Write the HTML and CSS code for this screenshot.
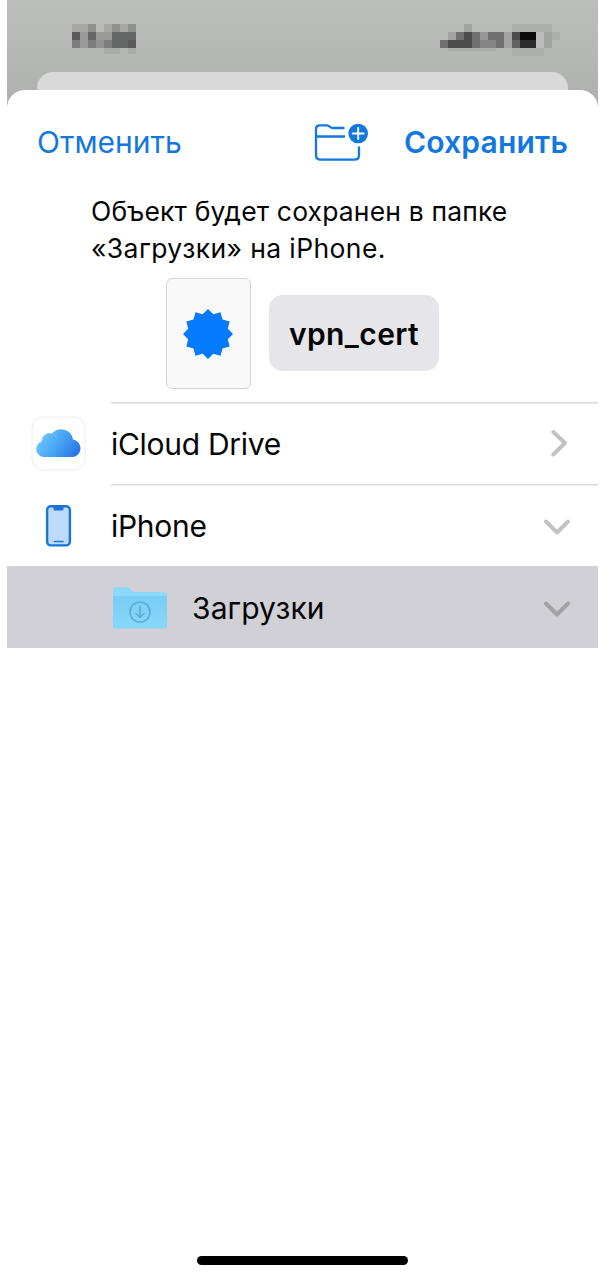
FILE: index.html
```html
<!DOCTYPE html>
<html lang="ru">
<head>
<meta charset="utf-8">
<title>Сохранение</title>
<link rel="stylesheet" href="styles.css">
</head>
<body>
<main class="phone">
  <header class="status">
    <svg class="clock" width="64" height="32" viewBox="0 0 8 4" shape-rendering="crispEdges">
      <path fill="#a6a7a5" d="M0 0h1v1H0zM1 0h1v1H1zM4 0h1v1H4zM6 0h1v1H6z"/>
      <path fill="#8f918f" d="M2 0h1v1H2zM5 0h1v1H5zM7 0h1v1H7z"/>
      <path fill="#595a59" d="M0 1h1v1H0zM7 2h1v1H7z"/>
      <path fill="#646765" d="M2 1h1v1H2zM5 1h3v1H5zM5 2h2v1H5z"/>
      <path fill="#9b9c9a" d="M1 1h1v1H1zM3 1h2v1H3zM1 2h1v1H1z"/>
      <path fill="#7c7d7c" d="M0 2h1v1H0zM2 2h1v1H2zM4 2h1v1H4z"/>
      <path fill="#919290" d="M3 2h1v1H3z"/>
      <path fill="#abacaa" d="M4 3h2v.75H4zM7 3h1v.75H7z"/>
    </svg>
    <svg class="signals" width="120" height="32" viewBox="0 0 15 4" shape-rendering="crispEdges">
      <path fill="#abaeab" d="M9 0h5v1H9zM9 3h4v1H9zM14 1h1v1h-1zM1 3h6v.4H1z"/>
      <path fill="#a2a4a1" d="M3 0h1v1H3zM13 1h1v2h-1zM1 1h1v1H1zM8 1h1v2H8z"/>
      <path fill="#959795" d="M5 1h1v1H5z"/>
      <path fill="#707170" d="M2 1h1v1H2zM0 2h1v1H0zM4 1h1v2H4zM6 1h2v1H6zM7 2h1v1H7z"/>
      <path fill="#848584" d="M5 2h2v1H5z"/>
      <path fill="#4a4b4a" d="M3 1h1v1H3zM1 2h3v1H1zM9 1h1v1H9z"/>
      <path fill="#626462" d="M9 2h1v1H9z"/>
      <path fill="#0b0b0b" d="M10 1h2v1h-2z"/>
      <path fill="#2c2c2c" d="M10 2h2v1h-2z"/>
      <path fill="#b9bcba" d="M12 1h1v2h-1z"/>
    </svg>
  </header>
  <div class="back-card"></div>
  <section class="sheet">
    <nav class="toolbar">
      <span class="cancel">Отменить</span>
      <svg class="new-folder" width="56" height="40" viewBox="0 0 56 40" fill="none" stroke="#1278e0" stroke-width="2.300">
        <path d="M31.500 6H20c-3 0-3.500-2.700-6-2.700H6.500Q3 3.300 3 7v26q0 4.700 4.700 4.700h33.600q4.700 0 4.700-4.700V24.500M3 14.500h29" stroke-linejoin="round"/>
        <circle cx="45.200" cy="11.500" r="9.800" fill="#1278e0" stroke="none"/>
        <path d="M45.200 6v11M39.700 11.500h11" stroke="#fff" stroke-width="1.900" stroke-linecap="round"/>
      </svg>
      <span class="save">Сохранить</span>
    </nav>
    <p class="message"><span class="line-a">Объект будет сохранен в папке</span><br><span class="line-b">«Загрузки» на iPhone.</span></p>
    <div class="file">
      <div class="thumb">
        <svg width="50" height="50" viewBox="-25 -25 50 50">
          <path fill="#047aff" d="M0-25L5.300-19.800 12.500-21.650 14.500-14.500 21.650-12.500 19.800-5.300 25 0 19.800 5.300 21.650 12.500 14.500 14.500 12.500 21.650 5.300 19.800 0 25-5.300 19.800-12.500 21.650-14.500 14.500-21.650 12.500-19.800 5.300-25 0-19.800-5.300-21.650-12.500-14.500-14.500-12.500-21.650-5.300-19.800z"/>
        </svg>
      </div>
      <div class="name">vpn_cert</div>
    </div>
    <ul class="places">
      <li class="row">
        <div class="icon">
          <svg width="56" height="56" viewBox="0 0 56 56">
            <defs>
              <linearGradient id="cloud" x1="0" y1=".3" x2="1" y2=".7"><stop offset="0" stop-color="#72cafb"/><stop offset=".5" stop-color="#48a5f4"/><stop offset="1" stop-color="#2877e4"/></linearGradient>
            </defs>
            <rect x="1" y="1" width="53" height="53" rx="11" fill="#fff" stroke="#ececec"/>
            <path fill="url(#cloud)" d="M14 41A8 8 0 0 1 10.500 25.500 8.300 8.300 0 0 1 21 17.500 12 12 0 0 1 42 23.500 8.900 8.900 0 0 1 42.500 41z"/>
            <path d="M11 25a8.300 8.300 0 0 1 10-7.500q3 1 4.500 4" fill="none" stroke="#84d3ff" stroke-opacity=".6"/>
          </svg>
        </div>
        <span class="label drive">iCloud Drive</span>
        <svg class="chev" width="32" height="32" viewBox="0 0 32 32"><path d="M12.300 4L24 15 12.300 26.500"/></svg>
      </li>
      <li class="row">
        <div class="icon">
          <svg width="56" height="56" viewBox="0 0 56 56">
            <rect x="16.100" y="8.300" width="22.800" height="39.100" rx="3.800" fill="#bedaff" stroke="#1976d8" stroke-width="2.400"/>
            <path d="M22.500 9h10v2q0 1.500-1.500 1.500h-7Q22.500 12.500 22.500 11z" fill="#1976d8"/>
            <path d="M23.500 43.500h8.500" stroke="#1976d8" stroke-width="1.700" stroke-linecap="round"/>
          </svg>
        </div>
        <span class="label device">iPhone</span>
        <svg class="chev" width="32" height="32" viewBox="0 0 32 32"><path d="M5 11.500L16 22.500 27 11.500"/></svg>
      </li>
      <li class="row selected">
        <div class="icon">
          <svg width="56" height="44" viewBox="0 0 56 44">
            <defs><linearGradient id="folder" x1="0" y1="0" x2="0" y2="1"><stop offset="0" stop-color="#79cdf3"/><stop offset="1" stop-color="#86d8fb"/></linearGradient></defs>
            <path fill="#8bdaf9" d="M1 4q0-3 3-3h11q2 0 3.500 2t4 3H52q3 0 3 3v5H1z"/>
            <path fill="url(#folder)" d="M1 10h54v30q0 2.500-2.500 2.500h-49Q1 42.500 1 40z"/>
            <g fill="none" stroke="#5fadd0" stroke-width="1.600" stroke-linecap="round" stroke-linejoin="round"><circle cx="28" cy="26" r="10"/><path d="M28 20.500v11M24 27.500l4 4 4-4"/></g>
          </svg>
        </div>
        <span class="label downloads">Загрузки</span>
        <svg class="chev" width="32" height="32" viewBox="0 0 32 32"><path d="M5 11.500L16 22.500 27 11.500"/></svg>
      </li>
    </ul>
    <div class="home"></div>
  </section>
</main>
</body>
</html>
```
FILE: styles.css
```css
* { box-sizing: border-box; }

body {
  margin: 0;
  background: #fff;
  color: #050505;
  font-family: Inter, "Liberation Sans", sans-serif;
}

.phone {
  width: 591px;
  height: 1280px;
  margin-left: 7px;
  display: flex;
  flex-direction: column;
  background: linear-gradient(#bcbebb, #b3b5b2 72px, #adafac 110px);
}

.status {
  height: 72px;
  padding: 24px 38px 0 65px;
  display: flex;
  justify-content: space-between;
}

.back-card {
  height: 18px;
  margin: 0 30px;
  border-radius: 16px 16px 0 0;
  background: #d8d9d8;
}

.sheet {
  flex: 1;
  display: flex;
  flex-direction: column;
  border-radius: 18px 18px 0 0;
  background: #fff;
}

.toolbar {
  height: 103px;
  padding: 1px 30px 0;
  display: flex;
  align-items: center;
  color: #1278e0;
  font-size: 30px;
  white-space: nowrap;
}

.cancel { width: 276px; }

.new-folder { flex: none; }

.save {
  margin-left: auto;
  font-weight: 600;
  letter-spacing: .2px;
}

.message {
  height: 85px;
  margin: 0;
  padding: 0 84px;
  font-size: 26.5px;
  line-height: 37px;
  white-space: nowrap;
}

.line-a { letter-spacing: .15px; }

.line-b { letter-spacing: .4px; }

.file {
  height: 124px;
  padding-left: 159px;
  display: flex;
  align-items: center;
  gap: 18px;
}

.thumb {
  width: 85px;
  height: 111px;
  margin-bottom: 13px;
  padding-right: 1px;
  display: flex;
  align-items: center;
  justify-content: center;
  border: 1px solid #d5d5d6;
  border-radius: 6px;
  background: #f9f9fa;
}

.name {
  width: 170px;
  height: 76px;
  margin-bottom: 14px;
  border-radius: 14px;
  background: #e5e5ea;
  font-size: 30px;
  font-weight: 600;
  line-height: 79px;
  letter-spacing: .4px;
  text-align: center;
}

.places {
  margin: 0;
  padding: 0;
  list-style: none;
}

.row {
  height: 82px;
  padding: 2px 25px 0 24px;
  display: flex;
  align-items: center;
  background: linear-gradient(#dcdcde, #dcdcde) 104px 0 / 487px 1.500px no-repeat;
}

.icon {
  width: 80px;
  display: flex;
}

.label {
  flex: 1;
  font-size: 30px;
  line-height: 36px;
  white-space: nowrap;
}

.drive { letter-spacing: -.3px; }

.device { letter-spacing: -.3px; }

.downloads { letter-spacing: .1px; }

.chev {
  fill: none;
  stroke: #c2c2c4;
  stroke-width: 4;
  stroke-linecap: round;
  stroke-linejoin: round;
}

.selected {
  padding-left: 105px;
  background: #d1d0d6;
}

.selected .chev { stroke: #a2a2a7; }

.home {
  width: 211px;
  height: 9px;
  margin: auto auto 15px 190px;
  border-radius: 5px;
  background: #000;
}
```
